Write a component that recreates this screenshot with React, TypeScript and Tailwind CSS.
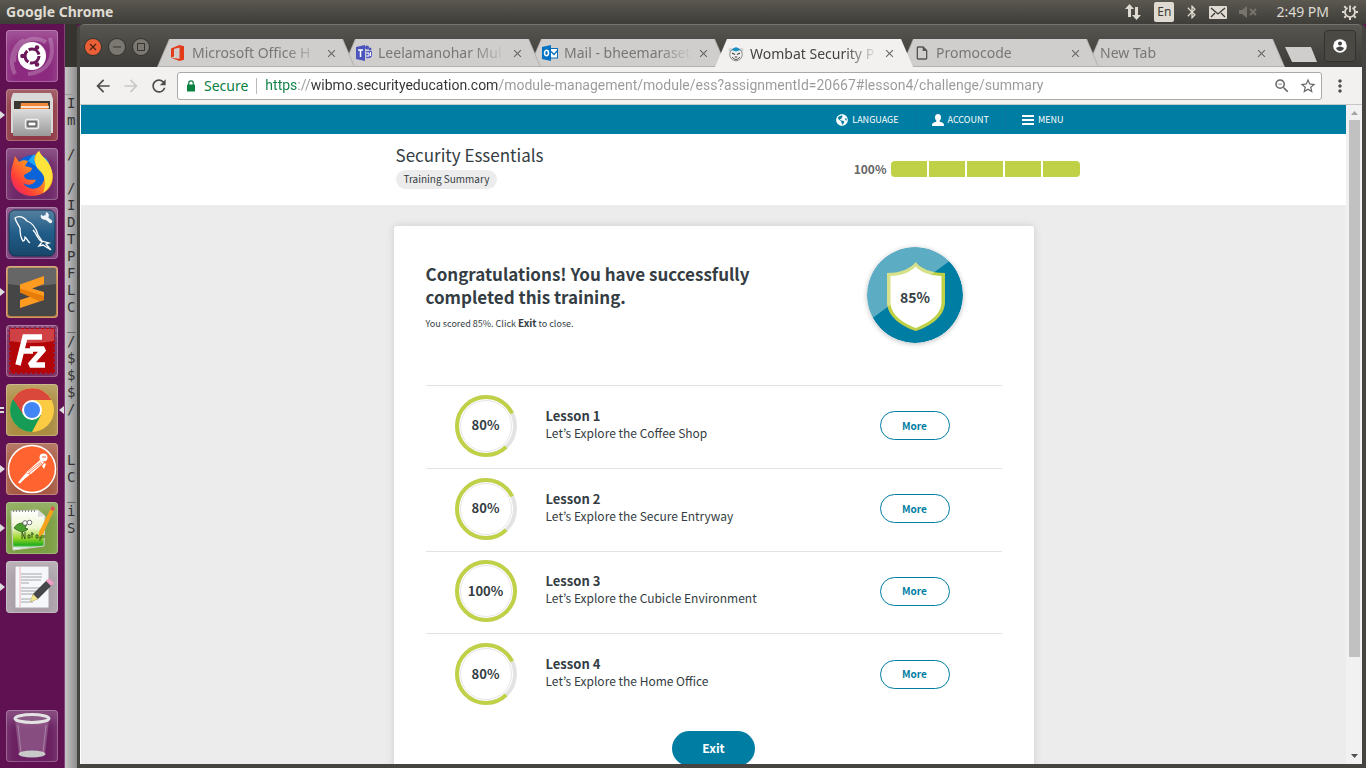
import React from "react";
import {
  MdArrowBack,
  MdArrowForward,
  MdRefresh,
  MdStarBorder,
  MdZoomOut,
  MdMoreVert,
  MdClose,
  MdOutlineInsertDriveFile,
  MdBluetooth,
} from "react-icons/md";
import { FaGlobeAmericas } from "react-icons/fa";

const lessons = [
  { id: 1, name: "Let’s Explore the Coffee Shop", score: 80 },
  { id: 2, name: "Let’s Explore the Secure Entryway", score: 80 },
  { id: 3, name: "Let’s Explore the Cubicle Environment", score: 100 },
  { id: 4, name: "Let’s Explore the Home Office", score: 80 },
];

const terminalLines = [
  "I", "m", "", "/", "", "/", "I", "D", "T", "P", "F", "L", "C", "_", "/",
  "$", "$", "$", "/", "", "", "L", "C", "_", "i", "S",
];

/* ---------- Desktop panel ---------- */

function TopPanel() {
  return (
    <header className="flex h-6 shrink-0 items-center justify-between bg-linear-to-b from-[#5b5850] to-[#3e3d39] pr-2 pl-[6px] font-['Noto_Sans',sans-serif] text-[#dfdbd2]">
      <span className="text-[14px] leading-6 font-bold">Google Chrome</span>
      <div className="flex items-center">
        <svg className="mr-3 h-[18px] w-[18px]" viewBox="0 0 18 18" fill="#dfdbd2">
          <path d="M5.500 1L10 6H7v8H4V6H1zM12.500 17L8 12h3V4h3v8h3z" />
        </svg>
        <span className="mr-[10px] flex h-5 w-5 items-center justify-center rounded-[2px] bg-[#dfdbd2] text-[12px] leading-5 text-[#3c3b37]">
          En
        </span>
        <MdBluetooth className="mr-[9px] h-[18px] w-[16px]" />
        <svg className="mr-3 h-[13px] w-[18px]" viewBox="0 0 18 13">
          <rect width="18" height="13" rx="1" fill="#dfdbd2" />
          <path d="M2 2l7 6 7-6M2 11l4-4M16 11l-4-4" fill="none" stroke="#3c3b37" strokeWidth="1.300" />
        </svg>
        <svg className="mr-[19px] h-[12px] w-[18px]" viewBox="0 0 18 12" fill="#77746c">
          <path d="M0 4h3l5-4v12L3 8H0z" />
          <path d="M11 3l6 6M17 3l-6 6" stroke="#77746c" strokeWidth="1.800" />
        </svg>
        <time className="mr-[13px] text-[14px] leading-6">2:49 PM</time>
        <svg className="h-4 w-4" viewBox="0 0 16 16" fill="none" stroke="#dfdbd2">
          <path d="M5.500 3.700a5 5 0 1 0 5 0M8 1.500v6.500" strokeWidth="1.800" />
          <path
            d="M0 8h2.500M13.500 8H16M8 13.500V16M2.300 2.300l1.700 1.700M13.700 2.300L12 4M2.300 13.700L4 12M13.700 13.700L12 12"
            strokeWidth="2"
          />
        </svg>
      </div>
    </header>
  );
}

/* ---------- Launcher ---------- */

function UbuntuIcon() {
  return (
    <svg viewBox="0 0 52 52" className="h-full w-full">
      <g fill="none" stroke="#fff" strokeOpacity=".22" strokeWidth="4">
        <path d="M8 32C8 12 26 4 40 12M44 8c6 20-2 34-22 36M9 44C3 32 6 16 18 10" />
      </g>
      <circle cx="26" cy="26" r="14" fill="#fff" />
      <circle cx="26" cy="26" r="7" fill="none" stroke="#6a1858" strokeWidth="3" strokeDasharray="13 1.660" />
      <circle cx="16.500" cy="26" r="2.300" fill="#6a1858" />
      <circle cx="31" cy="17.500" r="2.300" fill="#6a1858" />
      <circle cx="31" cy="34.500" r="2.300" fill="#6a1858" />
    </svg>
  );
}

function FilesIcon() {
  return (
    <svg viewBox="0 0 52 52" className="h-full w-full">
      <defs>
        <linearGradient id="cab" x2="0" y2="1">
          <stop stopColor="#ddd" />
          <stop offset="1" stopColor="#999" />
        </linearGradient>
      </defs>
      <path d="M7 4h38l2 6v34H5V10z" fill="#d9d9d9" />
      <path d="M8 12h36v10H8z" fill="#3a3733" />
      <path d="M15 14h27l1 8H14z" fill="#f0893e" />
      <path d="M15 18h28" stroke="#fff" strokeWidth="1.500" />
      <rect x="7" y="20" width="38" height="27" rx="1" fill="url(#cab)" />
      <rect x="19.500" y="30.500" width="13" height="9" rx="2" fill="#999" stroke="#eee" strokeWidth="1.500" />
      <rect x="22" y="33" width="8" height="4" fill="#fff" stroke="#444" />
    </svg>
  );
}

function FirefoxIcon() {
  return (
    <svg viewBox="0 0 52 52" className="h-full w-full">
      <defs>
        <linearGradient id="fox" x1="1" y1="0" x2="0" y2="1">
          <stop stopColor="#fff44f" />
          <stop offset=".4" stopColor="#ff9a1f" />
          <stop offset=".75" stopColor="#ff3d3a" />
          <stop offset="1" stopColor="#e0157c" />
        </linearGradient>
      </defs>
      <circle cx="27" cy="26" r="19" fill="#0a63d8" />
      <path d="M27 7c8-1 14 3 16 8l-12 4-9-6z" fill="#19a7ff" />
      <path
        d="M33 3c2 5 7 8 10 13 9 15 2 31-17 32C10 48 2 34 6 19l3-11 4 6c3-2 6-2 9-1l-3 5 7 2-1 3-7 4c0 7 11 4 12 5-2 5-9 6-13 3 5 8 18 8 21-3 2-9-7-13-9-18-2-4 1-9 4-11z"
        fill="url(#fox)"
      />
      <path d="M33 3c2 5 7 8 10 13 7 13 2 24-6 29 4-10 2-18-4-23-6-6-4-15 0-19z" fill="#ffe33a" />
    </svg>
  );
}

function WorkbenchIcon() {
  return (
    <svg viewBox="0 0 52 52" className="h-full w-full">
      <defs>
        <linearGradient id="wb" x2="0" y2="1">
          <stop stopColor="#56809f" />
          <stop offset=".5" stopColor="#215d89" />
          <stop offset="1" stopColor="#184669" />
        </linearGradient>
      </defs>
      <rect x="3" y="3" width="46" height="46" rx="6" fill="url(#wb)" stroke="#163550" />
      <path
        d="M24 36c-3-2-3-5-5-6 0 3-1 4-2 4-3-4-3-9-3-13-2-4-4-6-5-10 4-3 9-1 12 3 6 2 9 7 11 14l4 6 7 2-3 1 5 6-8-5-4 1 3-4c-5-3-5-8-9-12"
        fill="none"
        stroke="#fff"
        strokeWidth="1.300"
      />
      <path d="M39 10l5.500 4.500" stroke="#eef4f8" strokeWidth="3.500" strokeLinecap="round" />
      <path d="M35 7.500a4 4 0 1 0 5-2.500l-.500 3.500-2.500.500z" fill="#eef4f8" />
    </svg>
  );
}

function SublimeIcon() {
  return (
    <svg viewBox="0 0 52 52" className="h-full w-full">
      <rect x="2" y="2" width="48" height="48" rx="3" fill="#464646" />
      <path d="M2 5q0-3 3-3h42q3 0 3 3v13Q26 22 2 18z" fill="#666" />
      <path d="M14 18.500L38 10v8l-12 4.500L38 26v8l-24 8v-8l12-4-12-3.500z" fill="#ff9b21" />
      <path d="M14 26.500v-4l24 7.500v4l-5 1z" fill="#e77c08" />
    </svg>
  );
}

function FilezillaIcon() {
  return (
    <svg viewBox="0 0 52 52" className="h-full w-full">
      <rect x="3" y="3" width="46" height="46" fill="#b30507" stroke="#7c2f62" strokeWidth="3" strokeDasharray="2 3" />
      <path d="M4 4h44v12Q26 20 4 16z" fill="#cf4145" />
      <g fill="none" stroke="#fff" strokeWidth="5.500">
        <path d="M12 40l7-28h17M16 26h11" />
        <path d="M24 24h14L24 40h15" strokeLinejoin="bevel" />
      </g>
    </svg>
  );
}

function ChromeIcon() {
  return (
    <svg viewBox="0 0 52 52" className="h-full w-full">
      <circle cx="26" cy="26" r="22" fill="#fbcb43" />
      <path d="M26 26l9 5-9 17A22 22 0 0 1 7 15z" fill="#179c58" />
      <path d="M26 16h19.500a22 22 0 0 0-38.500-1l10.500 16z" fill="#d9483b" />
      <circle cx="26" cy="26" r="10" fill="#fff" />
      <circle cx="26" cy="26" r="8" fill="#4285f4" />
    </svg>
  );
}

function PostmanIcon() {
  return (
    <svg viewBox="0 0 52 52" className="h-full w-full">
      <circle cx="26" cy="26" r="23.500" fill="#fe6330" stroke="#fff" strokeWidth="1.500" />
      <circle cx="37.500" cy="14.500" r="4" fill="#fff" />
      <path d="M34 17l4 2.500L25 31l-5-1.500zM38.500 20l1.500 1-2 5-2-3zM20 30l4 1.500-5 4-5 5-2-1 4-5z" fill="#fff" />
      <path d="M22 28.500l13-9.500M23 30l13-10" stroke="#fe6330" strokeWidth=".7" />
      <path d="M36 14h4" stroke="#fe6330" />
    </svg>
  );
}

function NotepadIcon() {
  return (
    <svg viewBox="0 0 52 52" className="h-full w-full">
      <defs>
        <linearGradient id="pad" x2="0" y2="1">
          <stop stopColor="#fff" />
          <stop offset=".45" stopColor="#edf7cf" />
          <stop offset=".7" stopColor="#9ed52a" />
          <stop offset=".88" stopColor="#1fae1c" />
          <stop offset=".95" stopColor="#f5f5f5" />
        </linearGradient>
      </defs>
      <path d="M5 9l27-1 7 6-1 30-31 4z" fill="url(#pad)" stroke="#cfcfcf" />
      <path d="M7 9h24" stroke="#888" strokeWidth="2" strokeDasharray="1 2" />
      <path d="M32 8v7l7-1z" fill="#ddd" />
      <path d="M8 26c3-5 8-6 13-4l-2 4 3 1c-4 4-9 3-14-1z" fill="#4aa02c" stroke="#234d15" strokeWidth=".7" />
      <circle cx="19" cy="21" r="2.300" fill="#fff" stroke="#555" strokeWidth=".8" />
      <circle cx="23.500" cy="20.500" r="2.300" fill="#fff" stroke="#555" strokeWidth=".8" />
      <path
        d="M16 37v-7l3 7v-7M22 33v3h2v-3zM26 30v6M25 32h3M30 33v3h2v-3zM34 33v6M34 33h2v3h-2M38 33v3"
        stroke="#35581d"
        fill="none"
      />
      <path d="M46 4l3 2-12 26-4 3v-5z" fill="#f6a31c" />
      <path d="M46 4l3 2-1.500 3-3-1.500z" fill="#d0525e" />
    </svg>
  );
}

function GeditIcon() {
  return (
    <svg viewBox="0 0 52 52" className="h-full w-full">
      <rect x="9" y="5" width="34" height="42" fill="#f5f7fa" stroke="#a9a4a6" />
      <path d="M14 6v40" stroke="#f2b6b6" />
      <path
        d="M15 13h21M15 16h21M15 19h20M15 22h8M15 27h21M15 30h20M15 33h15M15 38h10M15 41h12"
        stroke="#a3a6aa"
        strokeWidth="1.200"
      />
      <path d="M24 41l3-8 14-14 5 5-14 14z" fill="#44464a" />
      <path d="M24 41l3-8 5 5z" fill="#efe38c" />
      <path d="M40 20l3-3 5 5-3 3z" fill="#ee9cc8" />
    </svg>
  );
}

function TrashIcon() {
  return (
    <svg viewBox="0 0 52 52" className="h-full w-full">
      <path d="M9 10h34l-4 34q-13 6-26 0z" fill="#fff" fillOpacity=".2" />
      <ellipse cx="26" cy="44" rx="13.500" ry="3.500" fill="#c9c9c9" />
      <ellipse cx="26" cy="8.500" rx="17" ry="4" fill="#8b5a86" stroke="#e3e3e3" strokeWidth="3" />
      <path d="M12 15l3 28M40 15l-3 28" stroke="#fff" strokeOpacity=".3" />
    </svg>
  );
}

const launcherItems = [
  { name: "Search your computer", icon: <UbuntuIcon />, tint: "bg-[#8b2a7e]", running: false },
  { name: "Files", icon: <FilesIcon />, tint: "bg-[#8f3a45]", running: true },
  { name: "Firefox", icon: <FirefoxIcon />, tint: "bg-[#6f2868]", running: false },
  { name: "MySQL Workbench", icon: <WorkbenchIcon />, tint: "bg-[#7a3a78]", running: false },
  { name: "Sublime Text", icon: <SublimeIcon />, tint: "bg-[#b87a3a]", running: true },
  { name: "FileZilla", icon: <FilezillaIcon />, tint: "bg-[#7c2f62]", running: false },
  { name: "Google Chrome", icon: <ChromeIcon />, tint: "bg-[#ab8d42]", running: true },
  { name: "Postman", icon: <PostmanIcon />, tint: "bg-[#a65a43]", running: true },
  { name: "Notepadqq", icon: <NotepadIcon />, tint: "bg-[#7d9f44]", running: true },
  { name: "Text Editor", icon: <GeditIcon />, tint: "bg-[#aba0a8]", running: true },
];

function LauncherButton({ name, icon, tint, running }: (typeof launcherItems)[number]) {
  const active = name === "Google Chrome";
  return (
    <li className="flex h-[52px] items-center">
      <span className="w-[6px]">
        {running && (
          <svg className="h-[8px] w-[5px]" viewBox="0 0 5 8" fill="#ddd">
            {active ? <path d="M0 1h4v2H0zM0 5h4v2H0z" /> : <path d="M0 0l5 4-5 4z" />}
          </svg>
        )}
      </span>
      <button
        aria-label={name}
        className={`h-[52px] w-[52px] overflow-hidden rounded-[4px] shadow-[inset_0_0_0_1px_rgba(255,255,255,0.25),inset_0_10px_12px_rgba(255,255,255,0.2)] ${tint}`}
      >
        {icon}
      </button>
      {active && (
        <svg className="ml-[1px] h-[8px] w-[5px]" viewBox="0 0 5 8" fill="#ddd">
          <path d="M5 0v8L0 4z" />
        </svg>
      )}
    </li>
  );
}

function Launcher() {
  return (
    <nav className="flex w-[65px] shrink-0 flex-col justify-between border-r border-[#83407a] bg-[#5f1151] pt-[6px] pb-[6px]">
      <ul className="flex flex-col gap-[7px]">
        {launcherItems.map((item) => (
          <LauncherButton key={item.name} {...item} />
        ))}
      </ul>
      <ul>
        <LauncherButton name="Trash" icon={<TrashIcon />} tint="bg-[#6a2061]" running={false} />
      </ul>
    </nav>
  );
}

function TerminalStrip() {
  return (
    <aside className="flex w-3 shrink-0 flex-col overflow-hidden bg-linear-to-r from-[#c6c6c6] to-[#8e8e8e]">
      <div className="h-[43px] shrink-0 bg-[#35342f]" />
      <div className="h-7 shrink-0 border-b border-[#999]" />
      <pre className="pl-[2px] font-['DejaVu_Sans_Mono',monospace] text-[14px] leading-[17px] text-[#333]">
        {terminalLines.join("\n")}
      </pre>
    </aside>
  );
}

/* ---------- Browser chrome ---------- */

function OfficeIcon() {
  return (
    <svg viewBox="0 0 16 16" className="h-4 w-4 shrink-0">
      <path d="M1 3.500L9.500 0 14 1.300v13.400L9.500 16 1 12.700l8.500 1V2.600L4 4v7.500l-3 1.200z" fill="#e43b1b" />
    </svg>
  );
}

function TeamsIcon() {
  return (
    <svg viewBox="0 0 16 16" className="h-4 w-4 shrink-0">
      <circle cx="14" cy="4" r="1.500" fill="#4b53bc" />
      <path d="M10 6h6v5q-1 3-6 2z" fill="#5a61c4" />
      <circle cx="11" cy="2.500" r="2" fill="#4b53bc" />
      <path d="M0 2l9-2v16l-9-2z" fill="#4b53bc" />
      <path d="M2 5h5M4.500 5v7" stroke="#fff" strokeWidth="1.500" />
      <path d="M10 8h3v3h-3M14.500 7v4" stroke="#fff" fill="none" />
    </svg>
  );
}

function OutlookIcon() {
  return (
    <svg viewBox="0 0 16 16" className="h-4 w-4 shrink-0">
      <rect x="8" y="3.500" width="7.500" height="9.500" fill="#fff" stroke="#0a6ebd" />
      <path d="M9 6.500l3 3 3.500-4" stroke="#0a6ebd" fill="none" strokeWidth="1.300" />
      <path d="M0 2l9-2v16l-9-2z" fill="#0072c6" />
      <ellipse cx="4.500" cy="8" rx="2" ry="2.700" fill="none" stroke="#fff" strokeWidth="1.500" />
    </svg>
  );
}

function WombatIcon() {
  return (
    <svg viewBox="0 0 16 16" className="h-4 w-4 shrink-0">
      <circle cx="2.500" cy="4" r="2" fill="#cfcfcf" />
      <circle cx="13.500" cy="4" r="2" fill="#cfcfcf" />
      <circle cx="8" cy="8.500" r="6.300" fill="#eee" stroke="#8b8b8b" />
      <path d="M3.500 4q4.500-5.500 9 0L8 5.500z" fill="#1b8fc0" />
      <path d="M4 7l3 1.500M12 7L9 8.500" stroke="#444" strokeWidth="1.200" />
      <path d="M6.500 10.500L8 12l1.500-1.500z" fill="#333" />
      <path d="M4 11q4 5 8 0" stroke="#555" fill="none" />
    </svg>
  );
}

const tabs = [
  { title: "Microsoft Office H", icon: <OfficeIcon />, layer: "z-[6]" },
  { title: "Leelamanohar Mul", icon: <TeamsIcon />, layer: "z-[5]" },
  { title: "Mail - bheemaraset", icon: <OutlookIcon />, layer: "z-[4]" },
  { title: "Wombat Security P", icon: <WombatIcon />, layer: "z-10", active: true },
  { title: "Promocode", icon: <MdOutlineInsertDriveFile className="h-4 w-4 shrink-0 text-[#555]" />, layer: "z-[2]" },
  { title: "New Tab", icon: null, layer: "z-[1]" },
];

function Tab({ title, icon, layer, active }: { title: string; icon: React.ReactNode; layer: string; active?: boolean }) {
  return (
    <div
      className={`relative -ml-3 h-7 w-[198px] shrink-0 [clip-path:polygon(12px_0,186px_0,100%_100%,0_100%)] ${layer} ${
        active ? "bg-[#f2f1f0]" : "bg-[#b3b1af]"
      }`}
    >
      <div
        className={`flex h-7 items-center pt-px pr-[17px] pl-[13px] [clip-path:polygon(13px_0,185px_0,197px_100%,1px_100%)] ${
          active ? "bg-[#f2f1f0] text-[#444]" : "border-b border-[#b3b1af] bg-[#d0cecc] text-[#777]"
        }`}
      >
        <button role="tab" aria-selected={!!active} className="flex min-w-0 flex-1 items-center gap-[6px]">
          {icon}
          <span className="flex-1 text-left text-[14px] leading-5 whitespace-nowrap [mask-image:linear-gradient(to_right,#000_95px,transparent_128px)]">
            {title}
          </span>
        </button>
        <button aria-label={`Close ${title}`} className="ml-1">
          <MdClose className="h-[13px] w-[13px] text-[#666]" />
        </button>
      </div>
    </div>
  );
}

function TitleBar() {
  return (
    <div className="flex h-[43px] shrink-0 items-end overflow-hidden rounded-t-[5px] border-t border-[#76746c] bg-linear-to-b from-[#575550] to-[#3d3c38] font-['Noto_Sans',sans-serif]">
      <div className="ml-[5px] flex w-[84px] shrink-0 gap-2 pb-3">
        <button aria-label="Close window" className="h-4 w-4 rounded-full bg-[#ea5f36] ring-1 ring-[#34332f]">
          <svg viewBox="0 0 16 16"><path d="M5 5l6 6M11 5l-6 6" stroke="#4a2013" strokeWidth="1.200" /></svg>
        </button>
        <button aria-label="Minimize window" className="h-4 w-4 rounded-full bg-[#7a7870] ring-1 ring-[#34332f]">
          <svg viewBox="0 0 16 16"><path d="M4 8h8" stroke="#34332f" /></svg>
        </button>
        <button aria-label="Maximize window" className="h-4 w-4 rounded-full bg-[#7a7870] ring-1 ring-[#34332f]">
          <svg viewBox="0 0 16 16"><path d="M4.500 4.500h7v7h-7z" fill="none" stroke="#34332f" /></svg>
        </button>
      </div>
      <div role="tablist" className="flex min-w-0">
        {tabs.map((tab) => (
          <Tab key={tab.title} {...tab} />
        ))}
      </div>
      <button aria-label="New tab" className="mb-[5px] h-[15px] w-8 shrink-0 bg-[#d0cecc] [clip-path:polygon(0_0,26px_0,100%_100%,7px_100%)]" />
      <button
        aria-label="Profile"
        className="mr-[6px] mb-[5px] ml-auto flex h-8 w-8 shrink-0 items-center justify-center rounded-[4px] border border-[#33322e] bg-[#4a4944]"
      >
        <svg viewBox="0 0 14 14" className="h-[14px] w-[14px]">
          <circle cx="7" cy="7" r="6.800" fill="#fff" />
          <circle cx="7" cy="4.600" r="2" fill="#444" />
          <path d="M3 9q4-3 8 0-1 3-4 3T3 9z" fill="#444" />
        </svg>
      </button>
    </div>
  );
}

function Toolbar() {
  return (
    <div className="flex h-[38px] shrink-0 items-center border-b border-[#c8c6c4] bg-[#f2f1f0] pr-3 pl-[13px] font-['Noto_Sans',sans-serif]">
      <button aria-label="Back"><MdArrowBack className="h-5 w-5 text-[#4d4d4d]" /></button>
      <button aria-label="Forward" className="ml-2"><MdArrowForward className="h-5 w-5 text-[#c9c8c7]" /></button>
      <button aria-label="Reload" className="ml-2"><MdRefresh className="h-5 w-5 text-[#4d4d4d]" /></button>
      <div className="ml-2 flex h-7 min-w-0 flex-1 items-center rounded-[3px] border border-[#aaa9a7] bg-white pr-1 pl-2">
        <svg viewBox="0 0 10 12" className="h-3 w-[10px] shrink-0">
          <rect x="1" y="4.500" width="8" height="7" rx=".5" fill="#0b8043" />
          <path d="M2.700 5V3.200a2.300 2.300 0 0 1 4.600 0V5" fill="none" stroke="#0b8043" strokeWidth="1.200" />
        </svg>
        <span className="ml-2 text-[14px] text-[#0b8043]">Secure</span>
        <span className="mx-2 h-4 w-px shrink-0 bg-[#bbb]" />
        <input
          aria-label="Address"
          spellCheck={false}
          defaultValue="https://wibmo.securityeducation.com/module-management/module/ess?assignmentId=20667#lesson4/challenge/summary"
          className="min-w-0 flex-1 bg-[linear-gradient(to_right,#0b8043_32px,#999_32px,#999_45px,#333_45px,#333_234px,#999_234px)] bg-clip-text font-['Roboto',sans-serif] text-[14px] text-transparent caret-black outline-none"
        />
        <button aria-label="Zoom"><MdZoomOut className="h-[18px] w-[18px] text-[#666]" /></button>
        <button aria-label="Bookmark" className="ml-2"><MdStarBorder className="h-[18px] w-[18px] text-[#666]" /></button>
      </div>
      <button aria-label="Browser menu" className="ml-2"><MdMoreVert className="h-5 w-5 text-[#4d4d4d]" /></button>
    </div>
  );
}

/* ---------- Training page ---------- */

function SiteNav() {
  return (
    <nav className="flex h-[29px] shrink-0 justify-center bg-[#007da2] text-[9px] text-white">
      <div className="flex w-full max-w-[732px] justify-end">
        <a href="#language" className="flex items-center gap-1 border-r border-[#0b759b] px-4">
          <FaGlobeAmericas className="h-3 w-3" />
          LANGUAGE
        </a>
        <a href="#account" className="flex items-center gap-1 border-r border-[#0b759b] px-4">
          <svg className="h-3 w-3" viewBox="0 0 12 12" fill="#fff">
            <path d="M6 0c2 0 3 1.300 3 3.200C9 5 8.200 6 7.500 6.700c0 1 .5 1.200 2 1.600C11.500 9 12 10 12 12H0c0-2 .5-3 2.500-3.700 1.500-.4 2-.6 2-1.600C3.800 6 3 5 3 3.200 3 1.300 4 0 6 0z" />
          </svg>
          ACCOUNT
        </a>
        <a href="#menu" className="flex items-center gap-1 px-4">
          <svg className="h-[10px] w-3" viewBox="0 0 12 10" fill="#fff">
            <path d="M0 0h12v2H0zM0 4h12v2H0zM0 8h12v2H0z" />
          </svg>
          MENU
        </a>
      </div>
    </nav>
  );
}

function CourseHeader() {
  return (
    <div className="flex h-[71px] shrink-0 justify-center bg-white">
      <div className="flex w-full max-w-[732px] items-start justify-between pl-12">
        <div className="pt-[9px]">
          <h1 className="text-[17px] leading-6">Security Essentials</h1>
          <p className="mt-[3px] w-fit rounded-full bg-[#ececec] px-2 pb-px text-[10px] leading-[18px]">Training Summary</p>
        </div>
        <div className="flex items-center gap-1 pt-[27px]">
          <span className="text-[12px] leading-4 font-bold text-[#666]">100%</span>
          <div className="flex h-4 w-[189px] gap-[2px] overflow-hidden rounded-[4px]">
            {[1, 2, 3, 4, 5].map((step) => (
              <span key={step} className="flex-1 bg-[#c0d148]" />
            ))}
          </div>
        </div>
      </div>
    </div>
  );
}

function ScoreBadge() {
  const shield = "M48.700 15C44 21 35 26 20 26v29c0 14 14 24 28.700 29C64 79 78 69 78 55V26C63 26 53 21 48.700 15z";
  return (
    <svg viewBox="0 0 96 96" className="h-24 w-24 rounded-full font-bold shadow-[0_1px_5px_rgba(0,0,0,0.25)]">
      <circle cx="48" cy="48" r="48" fill="#007da2" />
      <path d={shield} fill="#c0d148" />
      <path d="M0 0h96v4L6 70.700 0 75z" fill="#fff" fillOpacity=".36" />
      <path d="M48.700 19.500C43 25.500 34 29 23.500 29v26c0 12 11 20.500 25.200 26C63 75.500 74.500 67 74.500 55V29C64 29 54 25.500 48.700 19.500z" fill="#fff" />
      <text x="48" y="56" textAnchor="middle" fontSize="14" fill="#343d43">85%</text>
    </svg>
  );
}

function ScoreRing({ score }: { score: number }) {
  const around = 2 * Math.PI * 29;
  return (
    <div className="grid h-[62px] w-[62px] place-items-center">
      <svg viewBox="0 0 62 62" className="col-start-1 row-start-1 h-[62px] w-[62px]" fill="none">
        <circle cx="31" cy="31" r="29" stroke="#e3e3e3" strokeWidth="4" />
        <circle
          cx="31"
          cy="31"
          r="29"
          stroke="#c0d148"
          strokeWidth="4"
          strokeDasharray={`${(around * score) / 100} ${around}`}
          transform="rotate(46 31 31)"
        />
        <circle cx="31" cy="31" r="25.500" stroke="#e6e6e6" />
      </svg>
      <span className="col-start-1 row-start-1 pb-px text-[13px] leading-5 font-bold">{score}%</span>
    </div>
  );
}

function SummaryCard() {
  return (
    <section className="mx-auto mt-[21px] w-full max-w-[640px] shrink-0 rounded-t-[3px] bg-white px-8 pb-8 shadow-[0_0_8px_rgba(0,0,0,0.13)]">
      <div className="grid h-[159px] grid-cols-[1fr_174px]">
        <div className="max-w-[360px] pt-9">
          <h2 className="text-[17px] leading-[23px] font-bold">
            Congratulations! You have successfully completed this training.
          </h2>
          <p className="mt-[7px] text-[9px] leading-4">
            You scored 85%. Click <strong className="text-[10px]">Exit</strong> to close.
          </p>
        </div>
        <div className="flex justify-center pt-[21px]">
          <ScoreBadge />
        </div>
      </div>
      <ul className="flex h-[331px] flex-col">
        {lessons.map((lesson) => (
          <li
            key={lesson.id}
            className="grid flex-1 grid-cols-[120px_1fr_174px] items-center justify-items-center border-t border-[#dfe3e3] pb-[2px]"
          >
            <ScoreRing score={lesson.score} />
            <div className="w-full pb-1 text-[12px] leading-[17px]">
              <h3 className="text-[13px] font-bold">Lesson {lesson.id}</h3>
              <p>{lesson.name}</p>
            </div>
            <button className="h-[29px] w-[70px] rounded-full border border-[#007da2] pb-px text-[10px] font-bold text-[#007da2]">
              More
            </button>
          </li>
        ))}
      </ul>
      <div className="flex justify-center pt-[15px]">
        <button className="h-[35px] w-[83px] rounded-full bg-[#007da2] pb-px text-[12px] font-bold text-white">Exit</button>
      </div>
    </section>
  );
}

function Scrollbar() {
  return (
    <div className="flex w-4 shrink-0 flex-col items-center bg-[#f1f1f1]">
      <svg className="h-[15px] w-[15px] shrink-0" viewBox="0 0 15 15"><path d="M4 10h7L7.500 6z" fill="#a3a3a3" /></svg>
      <span className="w-[11px] flex-[537] bg-[#c1c1c1]" />
      <span className="flex-[92]" />
      <svg className="h-[15px] w-[15px] shrink-0" viewBox="0 0 15 15"><path d="M4 5h7L7.500 9z" fill="#505050" /></svg>
    </div>
  );
}

export default function App() {
  return (
    <div className="flex h-screen flex-col overflow-hidden bg-[#5f1151]">
      <TopPanel />
      <div className="flex min-h-0 flex-1">
        <Launcher />
        <TerminalStrip />
        <div className="flex min-w-0 flex-1 flex-col rounded-t-[5px] bg-[#454440] pr-1 pb-1 pl-[3px]">
          <TitleBar />
          <Toolbar />
          <div className="flex min-h-0 flex-1 bg-white pl-px">
            <main className="flex min-w-0 flex-1 flex-col overflow-hidden bg-[#ececec] font-['Noto_Sans_CJK_KR',sans-serif] text-[#343d43]">
              <SiteNav />
              <CourseHeader />
              <SummaryCard />
            </main>
            <Scrollbar />
          </div>
        </div>
      </div>
    </div>
  );
}
